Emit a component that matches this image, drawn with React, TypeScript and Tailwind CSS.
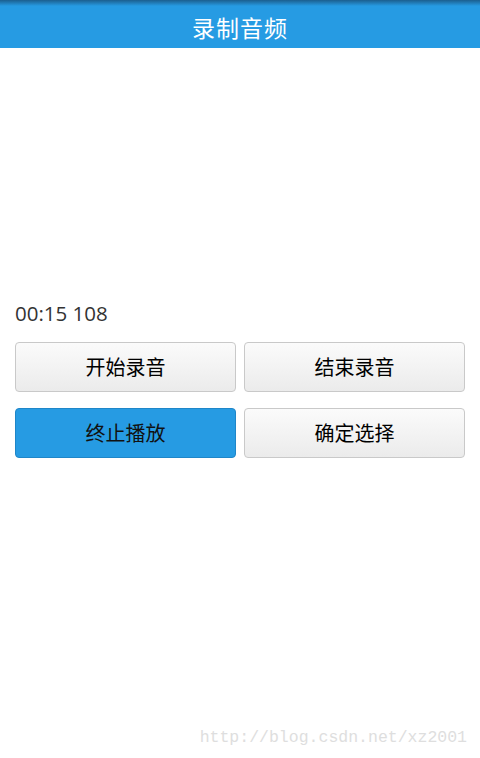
export default function App() {
  const cjk = { fontFamily: '"Noto Sans CJK SC", "Noto Sans", sans-serif' };
  const grayBtn =
    "h-[50px] rounded-[4px] border border-[#c9c9c9] bg-gradient-to-b from-[#fbfbfb] to-[#ebebeb] text-[20px] text-black flex items-center justify-center";
  return (
    <div className="relative w-[480px] h-[758px] bg-white overflow-hidden" style={cjk}>
      <div className="h-[48px] bg-[#269be3] flex flex-col">
        <div className="h-[6px] bg-gradient-to-b from-[#1b5f8f] to-[#269be3]" />
        <div className="flex-1 flex items-center justify-center -mt-[6px] pt-[6px]">
          <span className="text-white text-[23px] leading-none tracking-[1px]">录制音频</span>
        </div>
      </div>
      <div className="px-[15px] pt-[255px]">
        <div
          className="text-[20.5px] leading-none text-[#333] h-[23px]"
          style={{ fontFamily: '"Open Sans", "Noto Sans", sans-serif' }}
        >
          00:15 108
        </div>
        <div className="mt-[16px] grid grid-cols-2 gap-x-[8px] gap-y-[16px]">
          <button className={grayBtn}>开始录音</button>
          <button className={grayBtn}>结束录音</button>
          <button className="h-[50px] rounded-[4px] border border-[#1f86c8] bg-[#269be3] text-[20px] text-[#111] flex items-center justify-center">
            终止播放
          </button>
          <button className={grayBtn}>确定选择</button>
        </div>
      </div>
      <div
        className="absolute right-[13px] bottom-[7px] text-[16.5px] text-[#dedede]"
        style={{ fontFamily: '"Liberation Mono", "DejaVu Sans Mono", monospace' }}
      >
        http://blog.csdn.net/xz2001
      </div>
    </div>
  );
}
